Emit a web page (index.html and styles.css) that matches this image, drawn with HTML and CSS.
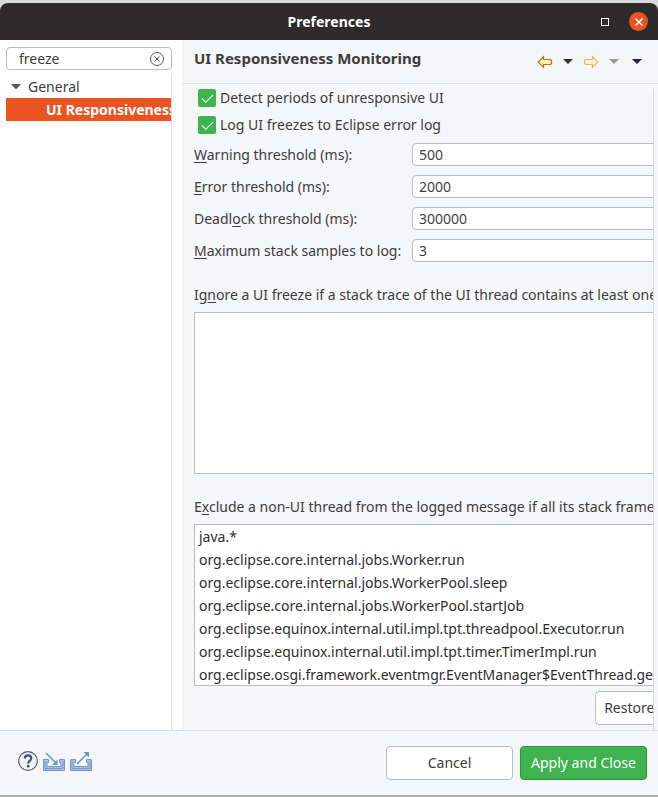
FILE: index.html
```html
<!DOCTYPE html>
<html lang="en">
<head>
<meta charset="utf-8">
<title>Preferences</title>
<link rel="stylesheet" href="styles.css">
</head>
<body>
<main class="window">
  <header class="titlebar">
    <h1 class="window-title">Preferences</h1>
    <div class="window-controls">
      <button class="maximize" type="button" aria-label="Maximize"></button>
      <button class="close" type="button" aria-label="Close">
        <svg width="20" height="20" viewBox="0 0 20 20"><path d="M6.500 6.500l7 7M13.500 6.500l-7 7" stroke="#fff" stroke-width="1.500" fill="none"/></svg>
      </button>
    </div>
  </header>

  <div class="body">
    <aside class="sidebar">
      <div class="search">
        <input class="search-input" type="text" value="freeze" aria-label="Filter preferences">
        <button class="clear" type="button" aria-label="Clear filter">
          <svg width="14" height="14" viewBox="0 0 14 14" fill="none" stroke="#555"><circle cx="7" cy="7" r="6.500"/><path d="M4.500 4.500l5 5M9.500 4.500l-5 5"/></svg>
        </button>
      </div>
      <ul class="tree">
        <li class="tree-row">
          <svg width="10" height="6" viewBox="0 0 10 6"><path d="M0 0h10L5 5.500z" fill="#555"/></svg>
          <span>General</span>
        </li>
        <li class="tree-row selected">UI Responsiveness Monitoring</li>
      </ul>
    </aside>

    <section class="page">
      <header class="page-header">
        <h2 class="page-title">UI Responsiveness Monitoring</h2>
        <div class="nav">
          <button type="button" aria-label="Back">
            <svg width="16" height="14" viewBox="0 0 16 14"><path d="M1.200 7l5.300-5.300V4.500h7l1 1v3l-1 1h-7v2.800z" fill="#fdf3c0" stroke="#b27a14" stroke-width="1.200"/></svg>
          </button>
          <button type="button" aria-label="Back history">
            <svg width="10" height="5" viewBox="0 0 10 5"><path d="M0 0h10L5 5z" fill="#333"/></svg>
          </button>
          <button type="button" aria-label="Forward">
            <svg width="16" height="14" viewBox="0 0 16 14"><path d="M14.800 7L9.500 1.700V4.500h-7l-1 1v3l1 1h7v2.800z" fill="#fbf2d3" stroke="#d9b879" stroke-width="1.200"/></svg>
          </button>
          <button type="button" aria-label="Forward history">
            <svg width="10" height="5" viewBox="0 0 10 5"><path d="M0 0h10L5 5z" fill="#999"/></svg>
          </button>
          <button class="menu" type="button" aria-label="Menu">
            <svg width="10" height="5" viewBox="0 0 10 5"><path d="M0 0h10L5 5z" fill="#2a1a42"/></svg>
          </button>
        </div>
      </header>

      <div class="viewport">
        <form class="form">
          <label class="check"><input type="checkbox" checked>Detect periods of unresponsive UI</label>
          <label class="check"><input type="checkbox" checked>Log UI freezes to Eclipse error log</label>
          <div class="fields">
            <label for="warning"><u>W</u>arning threshold (ms):</label>
            <input class="field" id="warning" type="text" value="500">
            <label for="error"><u>E</u>rror threshold (ms):</label>
            <input class="field" id="error" type="text" value="2000">
            <label for="deadlock">Deadl<u>o</u>ck threshold (ms):</label>
            <input class="field" id="deadlock" type="text" value="300000">
            <label for="samples"><u>M</u>aximum stack samples to log:</label>
            <input class="field" id="samples" type="text" value="3">
          </div>
          <div class="group">
            <label for="ignore">Ig<u>n</u>ore a UI freeze if a stack trace of the UI thread contains at least one</label>
            <select class="list" id="ignore" multiple></select>
          </div>
          <div class="group">
            <label for="exclude">E<u>x</u>clude a non-UI thread from the logged message if all its stack frames</label>
            <select class="list" id="exclude" multiple>
              <option>java.*</option>
              <option>org.eclipse.core.internal.jobs.Worker.run</option>
              <option>org.eclipse.core.internal.jobs.WorkerPool.sleep</option>
              <option>org.eclipse.core.internal.jobs.WorkerPool.startJob</option>
              <option>org.eclipse.equinox.internal.util.impl.tpt.threadpool.Executor.run</option>
              <option>org.eclipse.equinox.internal.util.impl.tpt.timer.TimerImpl.run</option>
              <option>org.eclipse.osgi.framework.eventmgr.EventManager$EventThread.getNextEvent</option>
            </select>
          </div>
          <button class="button restore" type="button">Restore Defaults</button>
        </form>
      </div>
    </section>
  </div>

  <footer class="footer">
    <div class="tools">
      <button type="button" aria-label="Help">
        <svg width="20" height="20" viewBox="0 0 20 20" fill="none"><circle cx="10" cy="10" r="9.300" fill="#f3f3f4" stroke="#4d5b78" stroke-width="1.200"/><path d="M6.800 7.600C6.800 5.200 8.200 4.300 10 4.300s3.300 1 3.300 2.900c0 2.300-3 2.500-3 5.200" stroke="#44526f" stroke-width="2.200"/><circle cx="10.200" cy="15.200" r="1.400" fill="#44526f"/></svg>
      </button>
      <button type="button" aria-label="Import">
        <svg width="22" height="20" viewBox="0 0 22 20" fill="none"><path d="M.5 8.500h5v3H4v4h14v-4h-1.500v-3h5v11H.5z" fill="#a9bfe6" stroke="#7d95c4"/><path d="M2 10v7.500h18V10" stroke="#7b97d0"/><path d="M3 2l9.500 9.500" stroke="#5b9cc5" stroke-width="1.500"/><path d="M14.500 8.500V14H9z" fill="#5b9cc5"/></svg>
      </button>
      <button type="button" aria-label="Export">
        <svg width="22" height="20" viewBox="0 0 22 20" fill="none"><path d="M.5 8.500h5v3H4v4h14v-4h-1.500v-3h5v11H.5z" fill="#a9bfe6" stroke="#7d95c4"/><path d="M2 10v7.500h18V10" stroke="#7b97d0"/><path d="M7 13L17 3" stroke="#5b9cc5" stroke-width="1.500"/><path d="M13.500 1H19v5.500z" fill="#5b9cc5"/></svg>
      </button>
    </div>
    <div class="actions">
      <button class="button" type="button">Cancel</button>
      <button class="button primary" type="button">Apply and Close</button>
    </div>
  </footer>
</main>
</body>
</html>
```
FILE: styles.css
```css
* {
  box-sizing: border-box;
}

body {
  margin: 0;
  padding: 3px 0 2px;
  min-height: 100vh;
  display: flex;
  background: linear-gradient(#d9d9d9 50%, #aeaeae 50%);
  color: #3d3d3d;
  font: 14px/20px "Noto Sans", "Open Sans", sans-serif;
}

button,
input,
select {
  margin: 0;
  color: inherit;
  font: inherit;
}

button {
  padding: 0;
  border: 0;
  background: none;
}

svg {
  display: block;
}

.window {
  flex: 1;
  min-width: 0;
  display: flex;
  flex-direction: column;
  overflow: hidden;
  border-radius: 8px 8px 0 0;
  background: #f5f6f7;
}

.titlebar {
  display: grid;
  grid-template-columns: 1fr auto 1fr;
  align-items: center;
  height: 37px;
  padding: 0 10px;
  background: #2c2a2b;
  color: #fff;
}

.window-title {
  grid-column: 2;
  margin: 0;
  font-size: 14px;
}

.window-controls {
  display: flex;
  justify-content: flex-end;
  align-items: center;
  gap: 20px;
}

.maximize {
  width: 8px;
  height: 8px;
  border: 1px solid #fff;
}

.close {
  width: 19px;
  height: 19px;
  display: grid;
  place-items: center;
  border-radius: 50%;
  background: #e95420;
}

.body {
  flex: 1;
  display: flex;
}

.sidebar {
  flex: none;
  width: 182px;
  display: flex;
  flex-direction: column;
  padding: 7px 10px 0 6px;
  background: #fff;
}

.search {
  display: flex;
  align-items: center;
  height: 23px;
  padding: 0 7px 0 12px;
  border: 1px solid #b8bdc4;
  border-radius: 4px;
}

.search-input {
  flex: 1;
  min-width: 0;
  padding: 0;
  border: 0;
  background: none;
}

.tree {
  flex: 1;
  margin: 5px 0 0;
  padding: 0;
  border-right: 1px solid #dcdfe2;
  list-style: none;
}

.tree-row {
  display: flex;
  align-items: center;
  gap: 7px;
  height: 23px;
  padding-left: 5px;
  overflow: hidden;
  white-space: nowrap;
}

.selected {
  padding-left: 40px;
  background: #e95420;
  color: #fff;
  font-weight: bold;
}

.page {
  flex: 1;
  min-width: 0;
  display: flex;
  flex-direction: column;
}

.page-header {
  display: flex;
  justify-content: space-between;
  align-items: center;
  height: 44px;
  padding: 0 16px 8px 12px;
  border-bottom: 1px solid #dfe2e4;
}

.page-title {
  margin: 0;
  font-size: 15px;
}

.nav {
  display: flex;
  align-items: center;
  gap: 10px;
  padding-top: 8px;
}

.menu {
  margin-left: 3px;
}

.viewport {
  flex: 1;
  margin: 5px 4px 0 12px;
  border-right: 1px solid #d9dcdf;
  overflow: hidden;
}

.form {
  display: flex;
  flex-direction: column;
  width: calc(100% + 69px);
  padding-bottom: 5px;
  white-space: nowrap;
}

.check {
  display: flex;
  align-items: center;
  gap: 4px;
  height: 18px;
  margin: 0 0 9px 4px;
}

.check input {
  appearance: none;
  width: 18px;
  height: 18px;
  border-radius: 2px;
  background: #3eb34f;
  display: grid;
  place-items: center;
}

.check input:checked::before {
  content: "";
  width: 10px;
  height: 5px;
  margin-bottom: 3px;
  border: solid #fff;
  border-width: 0 0 1px 1px;
  transform: rotate(-45deg);
}

.fields {
  display: grid;
  grid-template-columns: 211px 1fr;
  align-items: center;
  gap: 9px 7px;
}

.field {
  height: 23px;
  padding: 0 6px;
  border: 1px solid #b8bdc4;
  border-radius: 4px;
  background: #fff;
}

u {
  text-underline-offset: 2px;
}

.group {
  display: flex;
  flex-direction: column;
  gap: 7px;
  margin-top: 23px;
}

.list {
  height: 162px;
  padding: 0;
  overflow: hidden;
  border: 1px solid #b8bdc4;
  border-radius: 0;
  background: #fff;
}

.list option {
  height: 23px;
  padding: 2px 4px 0;
  color: #2e2e2e;
  line-height: 21px;
}

.button {
  min-width: 127px;
  height: 34px;
  padding: 0 8px;
  border: 1px solid #b8bdc4;
  border-radius: 4px;
  background: #fff;
}

.primary {
  border-color: #2f9440;
  background: #3eb34f;
  color: #fff;
}

.restore {
  align-self: flex-end;
  margin-top: 5px;
}

.footer {
  display: flex;
  justify-content: space-between;
  align-items: center;
  height: 65px;
  padding: 0 11px 0 18px;
  border-top: 1px solid #dfe2e4;
}

.tools {
  display: flex;
  align-items: center;
  gap: 5px;
  padding-bottom: 4px;
}

.actions {
  display: flex;
  gap: 7px;
}
```
